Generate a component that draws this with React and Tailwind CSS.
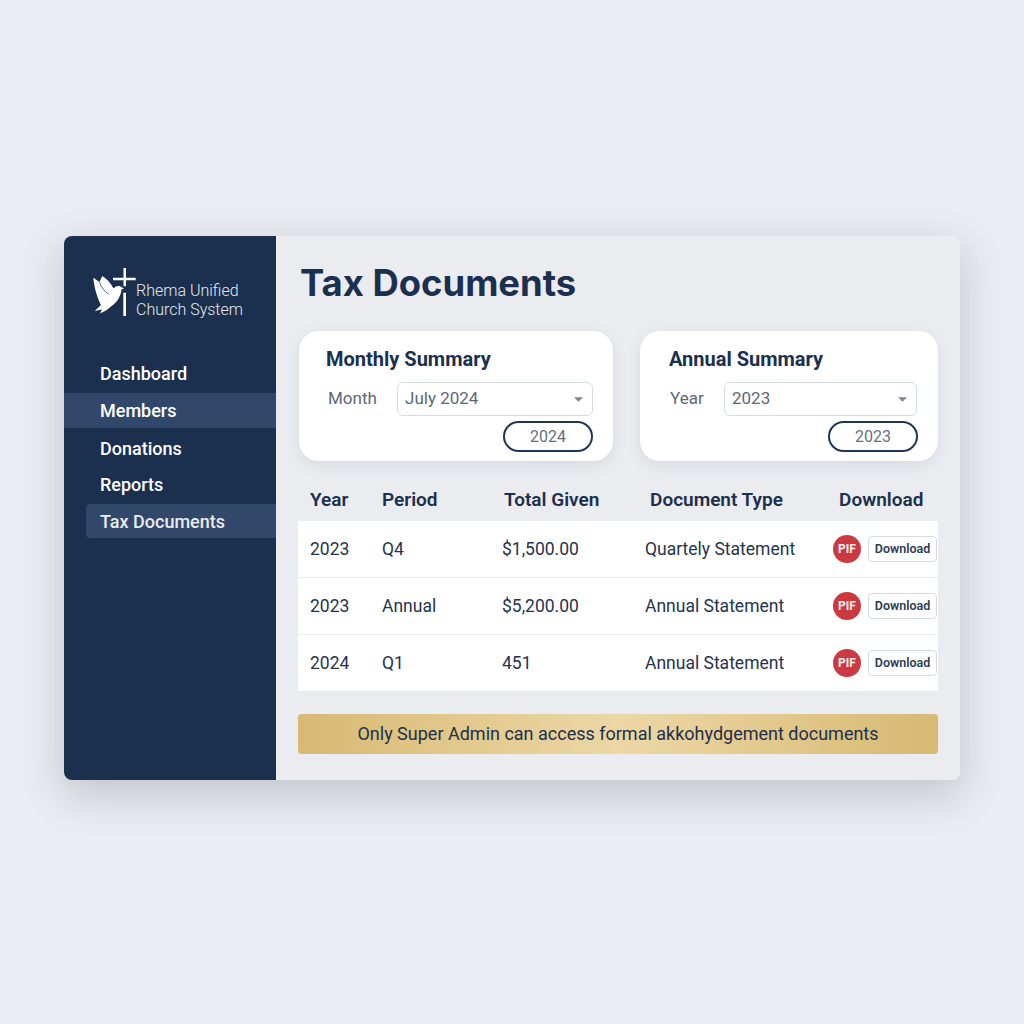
const navItems = [
  { label: "Dashboard", className: "h-[35px] pl-[36px] mb-[2px]" },
  { label: "Members", className: "h-[35px] pl-[36px] bg-[#32486a] mb-[2px]" },
  { label: "Donations", className: "h-[37px] pl-[36px]" },
  { label: "Reports", className: "h-[35px] pl-[36px] mb-[2px]" },
  { label: "Tax Documents", className: "h-[34px] ml-[22px] pl-[14px] bg-[#32486a] rounded-l-[4px] text-[#e8ebf0]" },
]

const rows = [
  { year: "2023", period: "Q4", total: "$1,500.00", type: "Quartely Statement" },
  { year: "2023", period: "Annual", total: "$5,200.00", type: "Annual Statement" },
  { year: "2024", period: "Q1", total: "451", type: "Annual Statement" },
]

const Logo = () => (
  <svg width="44" height="50" viewBox="0 0 44 50" className="shrink-0">
    <path d="M30.500 0h2.500v9.700h9.700v2.600H33v6h-2.500v-6H20v-2.600h10.500z" fill="#fff" />
    <rect x="30.300" y="24.700" width="2.700" height="23.300" fill="#fff" />
    <path d="M.3 9.700 6.500 14 9.300 8c4.700 3 8.700 7 11.200 12.500 1.500-2 4.500-3 7-2L31 20.500l-2.500 1c-.5 5.500-3.500 11.500-8 15-2.500 2-5.500 4.500-7.500 6l-6 3 2-4-7.300 1.500 6.300-6C5 31 1.500 22 .3 9.700z" fill="#fff" />
    <path d="M6.500 14c1.500 5 4.500 9 9 12" fill="none" stroke="#1b2f4e" strokeWidth=".7" />
  </svg>
)

const SummaryCard = ({ title, label, value, pill, className, titleClass, labelClass, selectClass, pillClass }) => (
  <div className={`h-[130px] bg-white rounded-[20px] shadow-[0_4px_14px_rgba(60,72,95,0.10)] ${className}`}>
    <h2 className={`pt-[15px] text-[20px] leading-[26px] font-bold text-[#1b2f4e] ${titleClass}`}>{title}</h2>
    <div className="flex items-center mt-[10px]">
      <span className={`text-[17px] text-[#5c6878] ${labelClass}`}>{label}</span>
      <div className={`h-[34px] flex items-center justify-between border border-[#d5dbe3] rounded-[6px] pl-[7px] pr-[9px] text-[17px] text-[#5c6878] ${selectClass}`}>
        {value}
        <svg width="9" height="5" viewBox="0 0 10 5"><path d="M0 0h10L5 5z" fill="#7c8694" /></svg>
      </div>
    </div>
    <div className={`flex mt-[5px] ${pillClass}`}>
      <div className="h-[31px] w-[90px] flex items-center justify-center pt-[1px] border-2 border-[#1e3553] rounded-full text-[16px] text-[#667180]">
        {pill}
      </div>
    </div>
  </div>
)

const App = () => {
  return (
    <div className="min-h-screen bg-[#e9ecf0] pt-[236px] pl-[64px]" style={{ fontFamily: "Roboto, sans-serif" }}>
      <div className="w-[896px] h-[544px] flex rounded-[8px] overflow-hidden shadow-[0_14px_40px_rgba(50,60,80,0.22)]">
        {/* Sidebar */}
        <aside className="w-[212px] shrink-0 bg-[#1b2f4e]">
          <div className="flex items-start pl-[29px] pt-[32px]">
            <Logo />
            <div className="ml-[-1px] mt-[13px] text-[16px] leading-[19px] text-[#e8ebf0] font-light">
              <div>Rhema Unified</div>
              <div className="whitespace-nowrap">Church System</div>
            </div>
          </div>
          <nav className="mt-[37px] text-[18px] font-medium text-white">
            {navItems.map((item) => (
              <div key={item.label} className={`flex items-center ${item.className}`}>
                {item.label}
              </div>
            ))}
          </nav>
        </aside>

        {/* Main */}
        <main className="flex-1 bg-[#eaecf0] pl-[22px] pr-[22px]">
          <h1 className="ml-[2px] pt-[25px] text-[36.4px] leading-[44px] font-bold text-[#1b2f4e] font-['Inter']">Tax Documents</h1>

          <div className="flex mt-[26px] ml-[1px]">
            <SummaryCard
              title="Monthly Summary"
              label="Month"
              value="July 2024"
              pill="2024"
              className="w-[314px]"
              titleClass="pl-[27px]"
              labelClass="w-[69px] ml-[29px]"
              selectClass="w-[196px]"
              pillClass="ml-[204px]"
            />
            <SummaryCard
              title="Annual Summary"
              label="Year"
              value="2023"
              pill="2023"
              className="w-[298px] ml-[27px]"
              titleClass="pl-[29px]"
              labelClass="w-[54px] ml-[30px]"
              selectClass="w-[193px]"
              pillClass="ml-[188px]"
            />
          </div>

          <div className="mt-[20px] w-[640px]">
            <div className="grid grid-cols-[72px_122px_146px_189px_1fr] h-[40px] items-center pl-[12px] pb-[3px] text-[19px] font-semibold text-[#1b2f4e] leading-none">
              <div>Year</div>
              <div>Period</div>
              <div>Total Given</div>
              <div>Document Type</div>
              <div>Download</div>
            </div>
            <div className="bg-white">
              {rows.map((row, i) => (
                <div
                  key={i}
                  className="grid grid-cols-[72px_120px_143px_188px_1fr] h-[57px] items-center pl-[12px] border-b border-[#e8ebef] text-[17.5px] text-[#25344d]"
                >
                  <div>{row.year}</div>
                  <div>{row.period}</div>
                  <div>{row.total}</div>
                  <div className="whitespace-nowrap">{row.type}</div>
                  <div className="flex items-center">
                    <div className="w-[28px] h-[28px] rounded-full bg-[#cb3a40] flex items-center justify-center text-[12px] font-bold text-[#fbeeee]">
                      PIF
                    </div>
                    <div className="ml-[7px] w-[69px] h-[26px] flex items-center justify-center bg-white border border-[#d5dbe3] rounded-[4px] text-[12.5px] font-semibold text-[#2b3c55]">
                      Download
                    </div>
                  </div>
                </div>
              ))}
            </div>
          </div>

          <div className="mt-[22px] w-[640px] h-[40px] flex items-center justify-center pb-[2px] rounded-[4px] bg-gradient-to-r from-[#d7b972] via-[#ecd7a5] to-[#d7b972] text-[18px] text-[#1e2f4a]">
            Only Super Admin can access formal akkohydgement documents
          </div>
        </main>
      </div>
    </div>
  )
}

export default App
